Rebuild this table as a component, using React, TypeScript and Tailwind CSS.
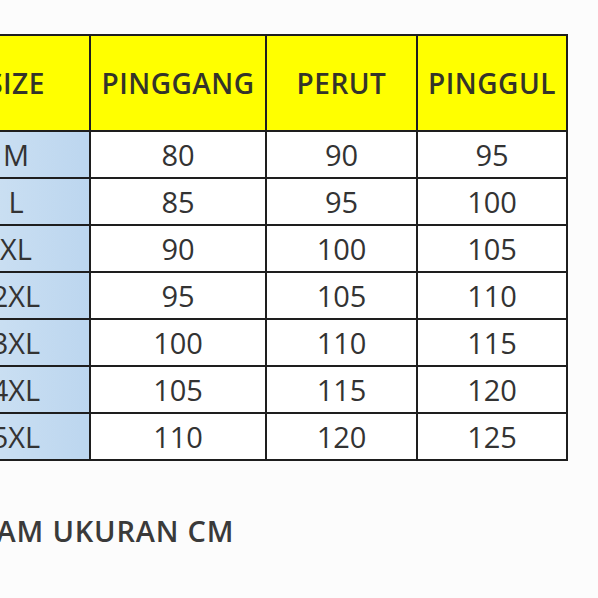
const HEAD = ["SIZE", "PINGGANG", "PERUT", "PINGGUL"];

const ROWS = [
  ["M", "80", "90", "95"],
  ["L", "85", "95", "100"],
  ["XL", "90", "100", "105"],
  ["2XL", "95", "105", "110"],
  ["3XL", "100", "110", "115"],
  ["4XL", "105", "115", "120"],
  ["5XL", "110", "120", "125"],
];

export default function App() {
  return (
    <div className="w-[598px] h-[598px] overflow-hidden bg-[#fcfcfc] text-[#333333] font-['Open_Sans',sans-serif]">
      <div className="ml-[-59px] pt-[34px]">
        <table className="border-collapse table-fixed">
          <colgroup>
            <col className="w-[148px]" />
            <col className="w-[176px]" />
            <col className="w-[151px]" />
            <col className="w-[150px]" />
          </colgroup>
          <thead>
            <tr className="h-[96px] bg-[#ffff00]">
              {HEAD.map((h) => (
                <th
                  key={h}
                  className="border-2 border-[#1e1e1e] p-0 text-center text-[28px] font-semibold tracking-[0.5px] text-[#34342a]"
                >
                  {h}
                </th>
              ))}
            </tr>
          </thead>
          <tbody>
            {ROWS.map((r) => (
              <tr key={r[0]} className="h-[47px]">
                {r.map((c, i) => (
                  <td
                    key={i}
                    className={
                      "border-2 border-[#1e1e1e] p-0 text-center text-[29px] font-medium leading-none " +
                      (i === 0 ? "bg-gradient-to-r from-[#d2e4f4] to-[#bcd6ef]" : "bg-white")
                    }
                  >
                    {c}
                  </td>
                ))}
              </tr>
            ))}
          </tbody>
        </table>
        <p className="mt-[48px] ml-[-3px] text-[29px] font-semibold tracking-[0.8px] text-[#3a3a3a]">DALAM UKURAN CM</p>
      </div>
    </div>
  );
}
